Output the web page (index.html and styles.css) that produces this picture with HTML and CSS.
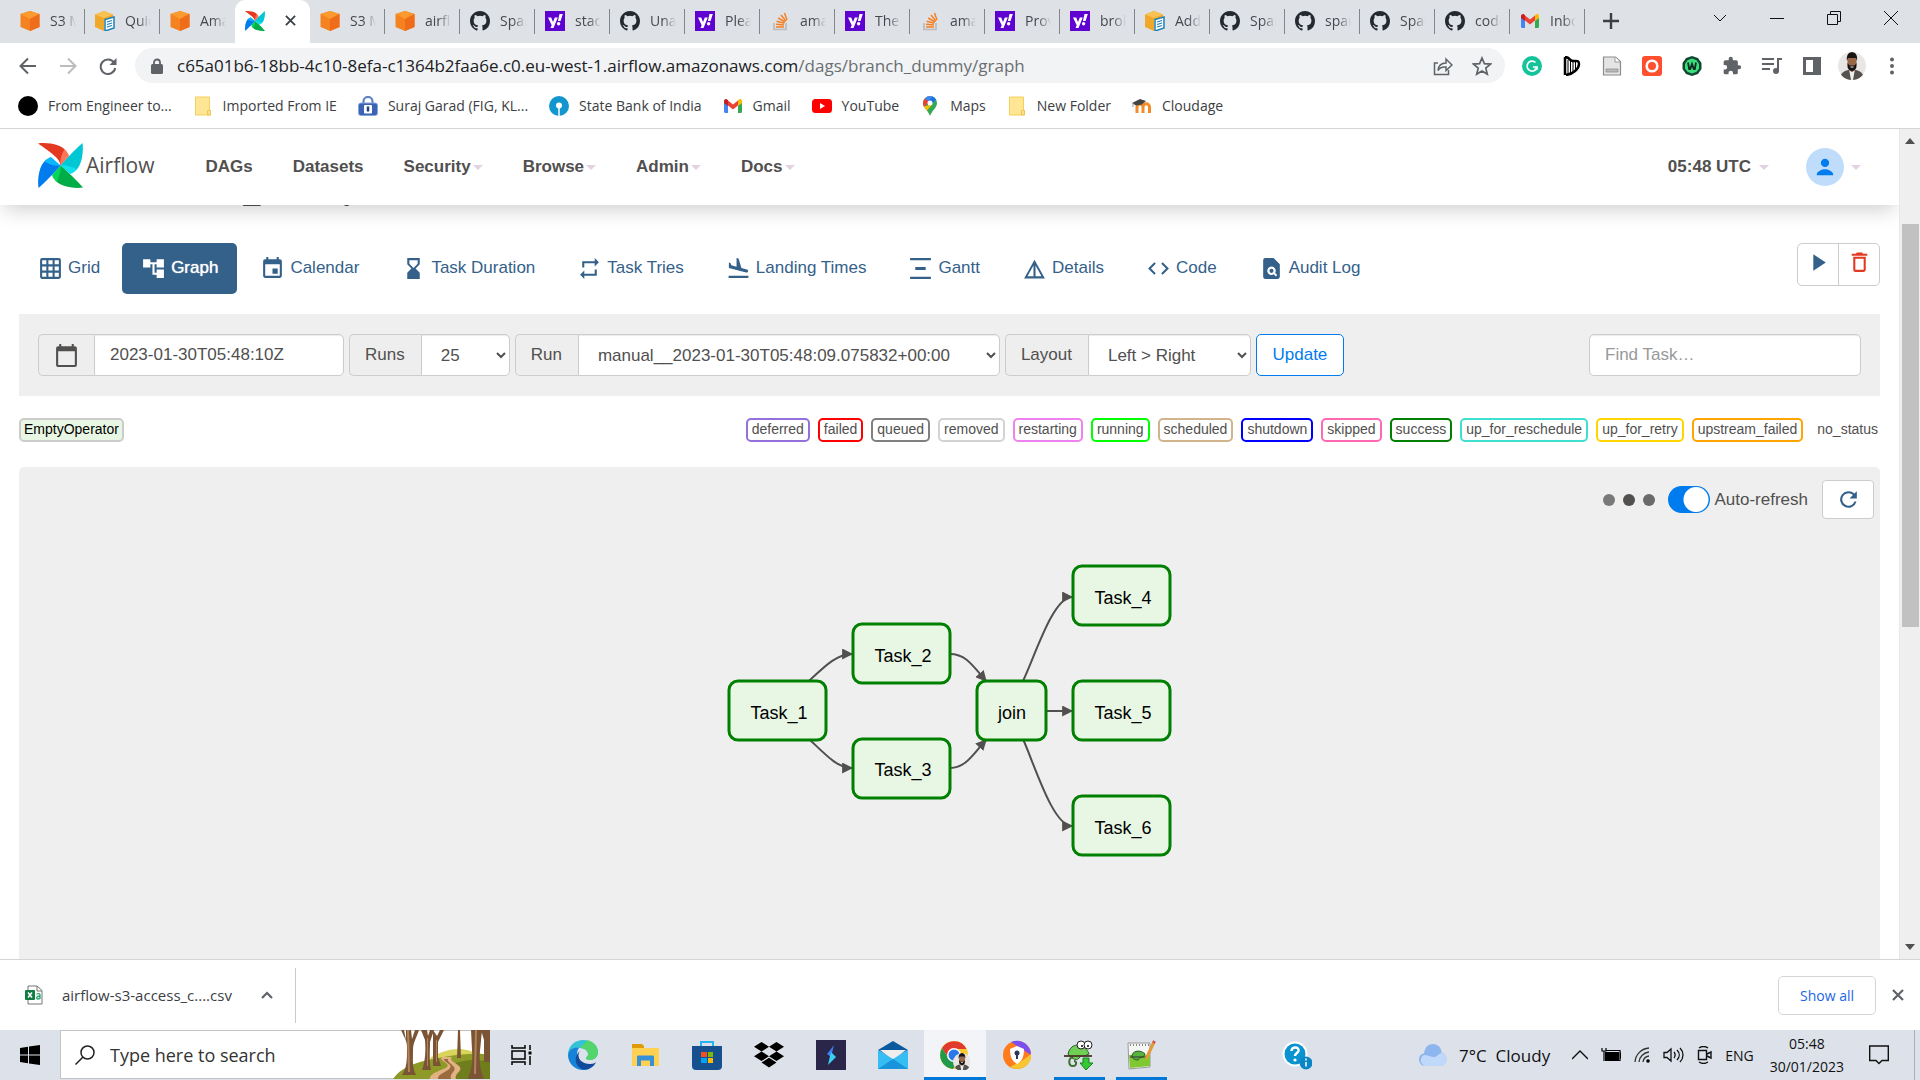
FILE: index.html
```html
<!DOCTYPE html>
<html lang="en">
<head>
<meta charset="utf-8">
<title>branch_dummy - Graph - Airflow</title>
<link rel="stylesheet" href="styles.css">
</head>
<body>
<svg class="defs" width="0" height="0" aria-hidden="true">
  <symbol id="cube" viewBox="0 0 20 20"><path d="M10 0l9.500 3v13L10 20 .5 16V3z" fill="#f58220"/><path d="M10 0l9.500 3L10 8 .5 3z" fill="#fb9a2e"/><path d="M10 8l9.500-5v13L10 20z" fill="#ef6c1a"/></symbol>
  <symbol id="docs" viewBox="0 0 20 20"><path d="M9 0l9 3.500v5L9 9v11L0 16V3.500z" fill="#f0a82a"/><path d="M9 0l9 3.500-9 3.500-9-3.500z" fill="#f8c153"/><path d="M10 8.500l9-2.500v11l-9 3z" fill="#fff" stroke="#1f82b8" stroke-width="1.500"/><path d="M12 11l5-1.500M12 13.500l5-1.500M12 16l5-1.500" stroke="#1f82b8" stroke-width="1.200"/></symbol>
  <symbol id="github" viewBox="0 0 16 16"><path fill="#24292f" d="M8 0C3.580 0 0 3.580 0 8c0 3.540 2.290 6.530 5.470 7.590.4.070.55-.17.55-.38v-1.490c-2.010.37-2.530-.49-2.690-.94-.09-.23-.48-.94-.82-1.130-.28-.15-.68-.52-.01-.53.63-.01 1.080.58 1.230.82.72 1.210 1.870.87 2.330.66.070-.52.28-.87.51-1.070-1.780-.2-3.640-.89-3.640-3.950 0-.87.31-1.590.82-2.150-.08-.2-.36-1.020.08-2.120 0 0 .67-.21 2.200.82a7.600 7.600 0 014 0c1.530-1.040 2.200-.82 2.200-.82.44 1.100.16 1.920.08 2.120.51.56.82 1.270.82 2.150 0 3.070-1.870 3.750-3.650 3.950.29.25.54.73.54 1.480v2.200c0 .21.15.46.55.38A8 8 0 0016 8c0-4.420-3.580-8-8-8z"/></symbol>
  <symbol id="yahoo" viewBox="0 0 20 20"><path fill="#5f01d1" d="M0 0h20v20H0z"/><path fill="#fff" d="M3 6.500h3.200L8 11l1.800-4.500h3L8.500 17h-3l1.200-2.800zM14.500 3h3.300l-2.200 7h-2.700z"/><circle cx="13.600" cy="12.800" r="1.700" fill="#fff"/></symbol>
  <symbol id="stack" viewBox="0 0 20 20"><path d="M4 12v6.500h12V12" fill="none" stroke="#bcbbbb" stroke-width="1.700"/><path d="M6 16h8M6 13.300l8 .8M6.600 10.300l7.700 2M8.200 7l6.800 4M11 4l5 6.200M14.500 2l2.500 7" stroke="#f48024" stroke-width="1.500"/></symbol>
  <symbol id="gmail" viewBox="0 0 20 20"><path fill="#4285f4" d="M1 5v10.500c0 .8.600 1.500 1.500 1.500H5V8z"/><path fill="#34a853" d="M19 5v10.500c0 .8-.6 1.500-1.500 1.500H15V8z"/><path fill="#ea4335" d="M5 4.500l5 4 5-4v5l-5 4-5-4z"/><path fill="#c5221f" d="M1 5c0-2 2-2.500 3.200-1.600L5 4.200V10L1 7z"/><path fill="#fbbc04" d="M19 5c0-2-2-2.500-3.200-1.600l-.8.800V10l4-3z"/></symbol>
  <symbol id="pinwheel" viewBox="0 0 45 45">
    <g><path fill="#e43921" d="M0 .5C10-1 26 2 28 9c2 3 0 7-5.500 13.500C22 15 12 9 0 .5z"/><path fill="#ff7557" d="M26.500 6c3 3 4.500 6 4.500 7l-8.500 9.500c-.5-4 0-9 4-16.500z"/></g>
    <g transform="rotate(90 22.500 22.500)"><path fill="#00c7d4" d="M0 .5C10-1 26 2 28 9c2 3 0 7-5.500 13.500C20 20 12 14 0 .5z"/><path fill="#11e1ee" d="M26.500 6c3 3 4.500 6 4.500 7l-8.500 9.500c-.5-4 0-9 4-16.500z"/></g>
    <g transform="rotate(180 22.500 22.500)"><path fill="#00ad46" d="M0 .5C10-1 26 2 28 9c2 3 0 7-5.500 13.500C20 20 12 14 0 .5z"/><path fill="#04d659" d="M26.500 6c3 3 4.500 6 4.500 7l-8.500 9.500c-.5-4 0-9 4-16.500z"/></g>
    <g transform="rotate(270 22.500 22.500)"><path fill="#017cee" d="M0 .5C10-1 26 2 28 9c2 3 0 7-5.500 13.500C20 20 12 14 0 .5z"/><path fill="#0cb6ff" d="M26.500 6c3 3 4.500 6 4.500 7l-8.500 9.500c-.5-4 0-9 4-16.500z"/></g>
  </symbol>
  <symbol id="folder" viewBox="0 0 20 20"><path d="M2.500 1h14v13l1 .5V18a1 1 0 01-1 1h-14z" fill="#ffe694" stroke="#f3cf5b"/><path d="M14.500 14.500h3V19h-3z" fill="#fbe08a" stroke="#e9c04a" stroke-width=".8"/></symbol>
  <symbol id="face" viewBox="0 0 28 28"><clipPath id="face-clip"><circle cx="14" cy="14" r="14"/></clipPath><g clip-path="url(#face-clip)"><path fill="#e9e7e6" d="M0 0h28v28H0z"/><path fill="#56534f" d="M2 28c0-7 4-9 8-10h8c5 1 8 4 8 10z"/><path fill="#eee" d="M11 17h6l-2 11h-2z"/><path fill="#9a6748" d="M9.500 6h9v10l-4 4h-1l-4-4z"/><path fill="#171412" d="M9 9c-1-6 2-9 5-9s6 3 5 9l-1-3h-8zM9.500 11l2 2.500h5l2-2.500c0 5-1 8-4.500 8s-4.500-3-4.500-8z"/><path fill="#eee" d="M12.500 14.500h3v1h-3z"/></g></symbol>
</svg>

<header class="browser">
  <nav class="tabstrip" aria-label="Browser tabs">
    <a class="tab" href="#"><svg><use href="#cube"/></svg><span>S3 Ma</span></a>
    <a class="tab" href="#"><svg><use href="#docs"/></svg><span>Quick</span></a>
    <a class="tab before-active" href="#"><svg><use href="#cube"/></svg><span>Amaz</span></a>
    <a class="tab active" href="#" aria-label="Airflow"><svg><use href="#pinwheel"/></svg><svg class="tab-close" viewBox="0 0 12 12"><path d="M1 1l10 10M11 1L1 11" stroke="#3c4043" stroke-width="2"/></svg></a>
    <a class="tab" href="#"><svg><use href="#cube"/></svg><span>S3 Ma</span></a>
    <a class="tab" href="#"><svg><use href="#cube"/></svg><span>airflo</span></a>
    <a class="tab" href="#"><svg><use href="#github"/></svg><span>Spar</span></a>
    <a class="tab" href="#"><svg><use href="#yahoo"/></svg><span>stack</span></a>
    <a class="tab" href="#"><svg><use href="#github"/></svg><span>Unab</span></a>
    <a class="tab" href="#"><svg><use href="#yahoo"/></svg><span>Pleas</span></a>
    <a class="tab" href="#"><svg><use href="#stack"/></svg><span>amaz</span></a>
    <a class="tab" href="#"><svg><use href="#yahoo"/></svg><span>The a</span></a>
    <a class="tab" href="#"><svg><use href="#stack"/></svg><span>amaz</span></a>
    <a class="tab" href="#"><svg><use href="#yahoo"/></svg><span>Prove</span></a>
    <a class="tab" href="#"><svg><use href="#yahoo"/></svg><span>broke</span></a>
    <a class="tab" href="#"><svg><use href="#docs"/></svg><span>Addi</span></a>
    <a class="tab" href="#"><svg><use href="#github"/></svg><span>Spar</span></a>
    <a class="tab" href="#"><svg><use href="#github"/></svg><span>spark</span></a>
    <a class="tab" href="#"><svg><use href="#github"/></svg><span>Spar</span></a>
    <a class="tab" href="#"><svg><use href="#github"/></svg><span>code</span></a>
    <a class="tab" href="#"><svg><use href="#gmail"/></svg><span>Inbox</span></a>
    <button class="new-tab" aria-label="New tab"><svg width="16" height="16" viewBox="0 0 16 16"><path d="M8 0v16M0 8h16" stroke="#3c4043" stroke-width="2.400"/></svg></button>
    <div class="window-controls">
      <button aria-label="Search tabs"><svg viewBox="0 0 14 14"><path d="M1 4l6 6 6-6"/></svg></button>
      <button aria-label="Minimize"><svg viewBox="0 0 14 14"><path d="M0 7.500h14"/></svg></button>
      <button aria-label="Restore"><svg viewBox="0 0 14 14"><path d="M.5 3.500h10v10H.5zM3.500 3V.5h10v10H11"/></svg></button>
      <button aria-label="Close"><svg viewBox="0 0 14 14"><path d="M0 0l14 14M14 0L0 14"/></svg></button>
    </div>
  </nav>

  <div class="toolbar">
    <button aria-label="Back"><svg viewBox="0 0 18 18"><path d="M17 9H2M9 1.500L1.500 9 9 16.500" fill="none" stroke="#5f6368" stroke-width="2"/></svg></button>
    <button aria-label="Forward"><svg viewBox="0 0 18 18"><path d="M1 9h15M9 1.500L16.500 9 9 16.500" fill="none" stroke="#babcbe" stroke-width="2"/></svg></button>
    <button aria-label="Reload"><svg viewBox="0 0 18 18"><path d="M15 5.500A7.300 7.300 0 1016.200 11" fill="none" stroke="#5f6368" stroke-width="2"/><path d="M17.500 1v7h-7z" fill="#5f6368"/></svg></button>
    <div class="omnibox">
      <svg width="12" height="16" viewBox="0 0 12 16"><path d="M3 7V4.500a3 3 0 016 0V7" fill="none" stroke="#5f6368" stroke-width="1.800"/><rect y="6" width="12" height="10" rx="1.500" fill="#5f6368"/></svg>
      <span class="url">c65a01b6-18bb-4c10-8efa-c1364b2faa6e.c0.eu-west-1.airflow.amazonaws.com<span>/dags/branch_dummy/graph</span></span>
      <button aria-label="Share"><svg viewBox="0 0 20 20"><path d="M5 7H1.500v11.500h14V14M5 14.500c.5-5 3.500-7.500 8-7.500V3l6 6-6 5.500V11c-4-.5-6.500 1-8 3.500z" fill="none" stroke="#5f6368" stroke-width="1.500"/></svg></button>
      <button aria-label="Bookmark"><svg viewBox="0 0 20 20"><path d="M10 2l2.400 5.600 6.100.5-4.700 4 1.500 6L10 14.900l-5.300 3.200 1.500-6-4.700-4 6.100-.5z" fill="none" stroke="#5f6368" stroke-width="1.700"/></svg></button>
    </div>
    <div class="extensions">
      <button aria-label="Grammarly"><svg viewBox="0 0 20 20"><circle cx="10" cy="10" r="10" fill="#15c39a"/><path d="M13.500 6.500A5 5 0 1015 11h-4M12.500 13H15v-2.500" fill="none" stroke="#fff" stroke-width="1.700"/></svg></button>
      <button aria-label="Harp"><svg viewBox="0 0 20 20"><path d="M3 1v18M3 1c5 0 4 4 8 4 3 0 6-1 6 3 0 5-6 10-13 11" fill="none" stroke="#000" stroke-width="2.500"/><path d="M6 4v14M8.500 5v12M11 6v9M13.500 6v7" stroke="#000"/></svg></button>
      <button aria-label="Page"><svg viewBox="0 0 20 20"><path d="M1.500 1h12l5 4.500V19h-17z" fill="#e4e4e4" stroke="#8b8b8b" stroke-width="1.200"/><path d="M13 1v5h5" fill="#fff" stroke="#999"/><path d="M4 13h12v3H4z" fill="#bbb" stroke="#888" stroke-width=".7"/></svg></button>
      <button aria-label="Office"><svg viewBox="0 0 20 20"><rect width="20" height="20" rx="3" fill="#ff4f2e"/><circle cx="10" cy="10" r="5.300" fill="none" stroke="#fff" stroke-width="2.600"/></svg></button>
      <button aria-label="Wappalyzer"><svg viewBox="0 0 20 20"><path d="M10 0l6 2 3.500 5v6L16 18l-6 2-6-2-3.500-5V7L4 2z" fill="#154734"/><path d="M10 2.500l4.500 1.700L17 8v4.500l-2.500 3.300L10 17.500l-4.500-1.700L3 12.500V8l2.500-3.800z" fill="#38e07b"/><path d="M6 6.500l1.200 6.500h1L10 8l1.800 5h1L14 6.500" fill="none" stroke="#102a20" stroke-width="1.800"/></svg></button>
      <button aria-label="Extensions"><svg viewBox="0 0 24 24"><path fill="#5f6368" d="M20.500 11H19V7a2 2 0 00-2-2h-4V3.500a2.500 2.500 0 00-5 0V5H4a2 2 0 00-2 2v3.800h1.500a2.700 2.700 0 010 5.400H2V20a2 2 0 002 2h3.800v-1.500a2.700 2.700 0 015.400 0V22H17a2 2 0 002-2v-4h1.500a2.500 2.500 0 000-5z"/></svg></button>
      <button aria-label="Media"><svg viewBox="0 0 20 20"><path d="M0 3h12M0 8h12M0 13h8M16 15V3h4" fill="none" stroke="#5f6368" stroke-width="2"/><circle cx="14" cy="15" r="3" fill="#5f6368"/></svg></button>
      <button aria-label="Side panel"><svg viewBox="0 0 20 20"><path fill="#5f6368" fill-rule="evenodd" d="M1 1h18v18H1zM4 4v12h7V4z"/></svg></button>
      <button aria-label="Profile"><svg class="avatar"><use href="#face"/></svg></button>
      <button aria-label="Menu"><svg viewBox="0 0 20 20" fill="#5f6368"><circle cx="10" cy="3.500" r="2"/><circle cx="10" cy="10" r="2"/><circle cx="10" cy="16.500" r="2"/></svg></button>
    </div>
  </div>

  <nav class="bookmarks" aria-label="Bookmarks">
    <a href="#"><svg viewBox="0 0 20 20"><circle cx="10" cy="10" r="10"/></svg>From Engineer to...</a>
    <a href="#"><svg><use href="#folder"/></svg>Imported From IE</a>
    <a href="#"><svg viewBox="0 0 20 20"><path d="M5.500 9V5.500a4.500 4.500 0 019 0V9" fill="none" stroke="#5d7fc4" stroke-width="2.200"/><rect x=".5" y="7" width="19" height="12.500" rx="2.500" fill="#3c62b4" stroke="#88a4dc"/><rect x="6" y="9" width="8" height="8.500" rx="1" fill="#fff"/><path d="M10 10.500v5" stroke="#223f86" stroke-width="2.500"/></svg>Suraj Garad (FIG, KL...</a>
    <a href="#"><svg viewBox="0 0 20 20"><circle cx="10" cy="10" r="10" fill="#1296cf"/><circle cx="10" cy="9.500" r="3" fill="#fff"/><path d="M10 9v11" stroke="#fff" stroke-width="1.500"/></svg>State Bank of India</a>
    <a href="#"><svg><use href="#gmail"/></svg>Gmail</a>
    <a href="#"><svg viewBox="0 0 20 20"><rect y="3" width="20" height="14" rx="3.500" fill="#f00"/><path d="M8 7l5 3-5 3z" fill="#fff"/></svg>YouTube</a>
    <a href="#"><svg viewBox="0 0 20 20"><path fill="#34a853" d="M3 7a7 7 0 0114 0c0 5-5 7-7 13C8 14 3 12 3 7z"/><path fill="#4285f4" d="M5 2.500A7 7 0 0112.500.5L6 9z"/><path fill="#1a73e8" d="M12.500.5A7 7 0 0116 3.500L12 8 8 6z"/><path fill="#ea4335" d="M5 2.500L9 6 4 11C2.500 8 2.500 5 5 2.500z"/><path fill="#fbbc04" d="M4 10.500L12.500 8 7 14.500C5.500 13 4.500 12 4 10.500z"/><circle cx="10" cy="7" r="2.500" fill="#fff"/></svg>Maps</a>
    <a href="#"><svg><use href="#folder"/></svg>New Folder</a>
    <a href="#"><svg viewBox="0 0 20 20"><path d="M5 17v-6a3 3 0 016 0v6m0-6a3 3 0 016.500 0v6" fill="none" stroke="#f28c28" stroke-width="3"/><path d="M0 7l8-4 6 2-4 3.500-6 1z" fill="#444"/><path d="M1 7v4" stroke="#999"/></svg>Cloudage</a>
  </nav>
</header>

<div class="viewport">
<div class="page">
  <nav class="navbar" aria-label="Airflow">
    <a class="brand" href="#"><svg><use href="#pinwheel"/></svg>Airflow</a>
    <a class="nav-item" href="#">DAGs</a>
    <a class="nav-item" href="#">Datasets</a>
    <a class="nav-item" href="#">Security<i class="caret"></i></a>
    <a class="nav-item" href="#">Browse<i class="caret"></i></a>
    <a class="nav-item" href="#">Admin<i class="caret"></i></a>
    <a class="nav-item" href="#">Docs<i class="caret"></i></a>
    <a class="nav-item clock" href="#">05:48 UTC<i class="caret"></i></a>
    <a class="user" href="#" aria-label="User"><span><svg viewBox="0 0 24 24"><path fill="#017cee" d="M12 12a4.500 4.500 0 100-9 4.500 4.500 0 000 9zM3 20.500c0-4 6-6 9-6s9 2 9 6V21H3z"/></svg></span><i class="caret"></i></a>
  </nav>

  <main class="content">
    <h1>DAG: branch_dummy</h1>
    <div class="view-row">
      <nav class="views" aria-label="DAG views">
        <a href="#"><svg viewBox="0 0 24 24"><path d="M20 2H4a2 2 0 00-2 2v16c0 1.100.9 2 2 2h16a2 2 0 002-2V4a2 2 0 00-2-2zM8 20H4v-4h4v4zm0-6H4v-4h4v4zm0-6H4V4h4v4zm6 12h-4v-4h4v4zm0-6h-4v-4h4v4zm0-6h-4V4h4v4zm6 12h-4v-4h4v4zm0-6h-4v-4h4v4zm0-6h-4V4h4v4z"/></svg>Grid</a>
        <a href="#" class="current"><svg viewBox="0 0 24 24"><path d="M22 11V3h-7v3H9V3H2v8h7V8h2v10h4v3h7v-8h-7v3h-2V8h2v3z"/></svg>Graph</a>
        <a href="#"><svg viewBox="0 0 24 24"><path d="M17 12h-5v5h5v-5zM16 1v2H8V1H6v2H5a2 2 0 00-2 2v14c0 1.100.9 2 2 2h14a2 2 0 002-2V5a2 2 0 00-2-2h-1V1h-2zm3 18H5V8h14v11z"/></svg>Calendar</a>
        <a href="#"><svg viewBox="0 0 24 24"><path d="M6 2v6l4 4-4 4v6h12v-6l-4-4 4-4V2H6zm10 5.500l-4 4-4-4V4h8z"/></svg>Task Duration</a>
        <a href="#"><svg viewBox="0 0 24 24"><path d="M7 7h10v3l4-4-4-4v3H5v6h2V7zm10 10H7v-3l-4 4 4 4v-3h12v-6h-2v4z"/></svg>Task Tries</a>
        <a href="#"><svg viewBox="0 0 24 24"><path d="M2.500 19h19v2h-19zM19.340 15.850c.8.210 1.620-.26 1.840-1.060.21-.8-.26-1.620-1.060-1.840l-5.310-1.420-2.760-9.020L10.120 2v8.280L5.150 8.950l-.93-2.320-1.450-.39v5.170l16.570 4.440z"/></svg>Landing Times</a>
        <a href="#"><svg viewBox="0 0 24 24"><path d="M2 2h20v2H2zM7 10.500h10v3H7zM2 20h20v2H2z"/></svg>Gantt</a>
        <a href="#"><svg viewBox="0 0 24 24"><path fill-rule="evenodd" d="M12 3.500L2 21.500h20zM11 9v10.500H5.300zm2 0l5.700 10.500H13z"/></svg>Details</a>
        <a href="#"><svg viewBox="0 0 24 24"><path d="M9.400 16.600L4.800 12l4.600-4.600L8 6l-6 6 6 6 1.400-1.400zm5.200 0l4.600-4.600-4.600-4.600L16 6l6 6-6 6-1.400-1.400z"/></svg>Code</a>
        <a href="#"><svg viewBox="0 0 24 24"><path fill-rule="evenodd" d="M14 2H6a2 2 0 00-2 2v16c0 1.100.9 2 2 2h12a2 2 0 002-2V8zM12 10.200a4 4 0 013.500 6l2 2.100-1.300 1.300-2-2.100A4 4 0 1112 10.200zm0 2a2 2 0 100 4 2 2 0 000-4z"/></svg>Audit Log</a>
      </nav>
      <div class="dag-actions">
        <button aria-label="Trigger DAG"><svg viewBox="0 0 24 24"><path fill="#34618a" d="M7 4l12 8-12 8z"/></svg></button>
        <button aria-label="Delete DAG"><svg viewBox="0 0 24 24"><path fill="#e43921" d="M6 19c0 1.100.9 2 2 2h8a2 2 0 002-2V6.500H6V19zM8 8.500h8V19H8V8.500zM15.500 3.500l-1-1h-5l-1 1H4.500v2h15v-2z"/></svg></button>
      </div>
    </div>

    <form class="filters">
      <div class="group">
        <label class="addon date-addon" for="base-date" aria-label="Base date"><svg viewBox="0 0 24 24"><path fill="#51504f" d="M20 3h-1V1h-2v2H7V1H5v2H4a2 2 0 00-2 2v16c0 1.100.9 2 2 2h16a2 2 0 002-2V5a2 2 0 00-2-2zm0 18H4V8h16v13z"/></svg></label>
        <input id="base-date" class="date" type="text" value="2023-01-30T05:48:10Z">
      </div>
      <div class="group">
        <label class="addon" for="runs">Runs</label>
        <select id="runs" class="runs"><option>25</option></select>
      </div>
      <div class="group">
        <label class="addon" for="run">Run</label>
        <select id="run" class="run"><option>manual__2023-01-30T05:48:09.075832+00:00</option></select>
      </div>
      <div class="group">
        <label class="addon" for="layout">Layout</label>
        <select id="layout" class="layout"><option>Left &gt; Right</option></select>
      </div>
      <button class="update" type="button">Update</button>
      <input class="find" type="text" placeholder="Find Task…" aria-label="Find task">
    </form>

    <div class="legend">
      <span class="chip operator">EmptyOperator</span>
      <span class="chip deferred">deferred</span>
      <span class="chip failed">failed</span>
      <span class="chip queued">queued</span>
      <span class="chip removed">removed</span>
      <span class="chip restarting">restarting</span>
      <span class="chip running">running</span>
      <span class="chip scheduled">scheduled</span>
      <span class="chip shutdown">shutdown</span>
      <span class="chip skipped">skipped</span>
      <span class="chip success">success</span>
      <span class="chip reschedule">up_for_reschedule</span>
      <span class="chip retry">up_for_retry</span>
      <span class="chip upstream">upstream_failed</span>
      <span class="chip none">no_status</span>
    </div>

    <section class="graph-panel" aria-label="Graph">
      <div class="graph-tools">
        <svg class="dots" viewBox="0 0 52 12"><circle cx="6" cy="6" r="6" fill="#7a7979"/><circle cx="26" cy="6" r="6" fill="#51504f"/><circle cx="46" cy="6" r="6" fill="#6b6a6a"/></svg>
        <label class="refresh-toggle"><input type="checkbox" checked>Auto-refresh</label>
        <button aria-label="Refresh"><svg viewBox="0 0 24 24"><path fill="#34618a" d="M17.650 6.350A8 8 0 1019.730 14h-2.080A6 6 0 1112 6c1.660 0 3.140.69 4.220 1.780L13 11h7V4l-2.350 2.350z"/></svg></button>
      </div>
      <svg class="graph" viewBox="0 0 446 294" role="img" aria-label="Task graph">
        <defs><marker id="arrow" viewBox="0 0 10 10" refX="9" refY="5" markerUnits="userSpaceOnUse" markerWidth="11" markerHeight="11" orient="auto"><path d="M0 0l10 5-10 5z" fill="#51504f"/></marker></defs>
        <g class="edges">
          <path d="M82 117C98 102 110 90 125 90"/>
          <path d="M82 175C98 190 110 204 125 204"/>
          <path d="M223 90C239 90 246 102 259 117"/>
          <path d="M223 204C239 204 246 190 259 176"/>
          <path d="M296 117C308 92 326 33 345 33"/>
          <path d="M319 147H345"/>
          <path d="M296 175C308 202 326 262 345 262"/>
        </g>
        <g class="nodes">
          <rect x="2" y="117" width="97" height="59" rx="9"/>
          <rect x="126" y="60" width="97" height="59" rx="9"/>
          <rect x="126" y="175" width="97" height="59" rx="9"/>
          <rect x="250" y="117" width="69" height="59" rx="9"/>
          <rect x="346" y="2" width="97" height="59" rx="9"/>
          <rect x="346" y="117" width="97" height="59" rx="9"/>
          <rect x="346" y="232" width="97" height="59" rx="9"/>
        </g>
        <g class="names">
          <text x="52" y="155">Task_1</text>
          <text x="176" y="98">Task_2</text>
          <text x="176" y="212">Task_3</text>
          <text x="285" y="155">join</text>
          <text x="396" y="40">Task_4</text>
          <text x="396" y="155">Task_5</text>
          <text x="396" y="270">Task_6</text>
        </g>
      </svg>
    </section>
  </main>
</div>
<div class="scrollbar" aria-hidden="true">
  <svg viewBox="0 0 10 6"><path d="M0 6l5-6 5 6z"/></svg>
  <div class="track"><div class="thumb"></div></div>
  <svg viewBox="0 0 10 6"><path d="M0 0l5 6 5-6z"/></svg>
</div>
</div>

<footer class="downloads">
  <div class="file">
    <svg width="18" height="20" viewBox="0 0 18 20"><path d="M3 1h9l5 4.500V19H3z" fill="#fff" stroke="#777"/><path d="M12 1v5h5" fill="none" stroke="#777"/><rect y="5" width="10" height="10" rx="1" fill="#107c41"/><path d="M3 7.500l4 5M7 7.500l-4 5" stroke="#fff" stroke-width="1.500"/><path d="M11.500 9c3-1 3.500 0 3.500 1v4m0-3c-4 0-4 3-2 3 1 0 2-1 2-2" fill="none" stroke="#21a366" stroke-width="1.300"/></svg>
    <span>airflow-s3-access_c....csv</span>
    <button aria-label="File menu"><svg width="12" height="8" viewBox="0 0 12 8"><path d="M1 7l5-5 5 5" fill="none" stroke="#5f6368" stroke-width="2.200"/></svg></button>
  </div>
  <button class="show-all">Show all</button>
  <button class="close" aria-label="Close"><svg width="12" height="12" viewBox="0 0 12 12"><path d="M1 1l10 10M11 1L1 11" stroke="#5f6368" stroke-width="2.200"/></svg></button>
</footer>

<footer class="taskbar">
  <button class="start" aria-label="Start"><svg width="20" height="20" viewBox="0 0 20 20"><path d="M0 3l8-1.200v7.700H0zM9 1.600L20 0v9.500H9zM0 10.500h8v7.700L0 17zM9 10.500h11V20L9 18.400z"/></svg></button>
  <label class="search">
    <svg width="20" height="20" viewBox="0 0 20 20"><circle cx="12.500" cy="7.500" r="6.500" fill="none" stroke="#222" stroke-width="1.500"/><path d="M8 12l-7.500 7.500" stroke="#222" stroke-width="1.500"/></svg>
    <input type="text" placeholder="Type here to search" aria-label="Type here to search">
    <svg class="forest" width="97" height="49" viewBox="0 0 97 49">
      <path d="M38 27c10-5 18-8 28-8s12 4 31 6v24H30z" fill="#d9d55c"/>
      <path d="M0 49c6-10 22-17 40-20 20-4 40-7 57-4v24z" fill="#8d9a27"/>
      <path d="M60 34c12-5 26-5 37-2v17H50z" fill="#6f7d1c"/>
      <path d="M49 27c-4 4 9 6 5 10-4 3-18 6-17 12h26c-2-6 8-8 3-13-4-4-10-5-7-9z" fill="#e2b184"/>
      <path d="M51 29c-1 3 9 5 6 9-3 4-13 6-12 11h13c-2-6 6-8 3-12-3-4-7-5-6-8z" fill="#9a6b3e"/>
      <g fill="#7a5434"><path d="M8 0c4 9 6 11 6 18 0 12 0 20-5 27h14c-4-7-3-15-3-25 0-8 4-13 6-20h-4l-3 9-1-9h-5v10L11 0zM28 0l4 10c1 13 0 22-3 30h9c-2-8-1-20-1-28l4-12h-4l-2 6-1-6zM40 0v36h8l-3-9V12l6-12h-4l-3 6zM78 0l1 20c1 14-1 20-4 29h16c-4-9-5-18-4-28l2-21zM65 0h2l1 28h-4zM88 0l3 10v22h7V0z"/></g>
      <g fill="#b08358"><path d="M14 0h2l1 42h-2zM34 8h1v28h-1zM43 10h1v22h-1zM82 0h2l-1 44h-2z"/></g>
    </svg>
  </label>
  <button class="app" aria-label="Task view"><svg class="task-view" viewBox="0 0 24 24"><path d="M3 2v3h13V2M3 8h13v8H3zM3 22v-3h13v3M21 2v5M21 13v9" fill="none" stroke="#000" stroke-width="1.500"/><path d="M19.500 8.500h3v3h-3z"/></svg></button>
  <button class="app" aria-label="Edge"><svg viewBox="0 0 30 30"><path d="M0 15C0 5 8 0 15 0c9 0 15 6 15 12 0 5-4 8-8 8-3 0-4-1-4-2 0-1 2-1 2-4 0-4-5-6-9-6C5 8 1 12 0 15z" fill="#35c1d8"/><path d="M18 0c8 1 12 7 12 12 0 5-4 8-8 8-3 0-4-1-4-2 0-1 2-1 2-4 0-4-4-6-8-6C16 2 20 3 18 0z" fill="#54d56b"/><path d="M0 15C1 9 6 7 11 8c-4 4-3 22 10 21C10 33 0 25 0 15z" fill="#1683d8"/><path d="M12 11c-4 5 0 13 10 13 3 0 5-1 6-2-2 5-8 9-14 7C6 26 6 15 12 11z" fill="#114a9b"/></svg></button>
  <button class="app" aria-label="File Explorer"><svg viewBox="0 0 30 30"><path d="M2 4h10l2 2v4H2z" fill="#e09b0b"/><path d="M2 8h27v18H2z" fill="#ffd152"/><path d="M7 26V17c0-1 .5-1.500 1.500-1.500h14c1 0 1.500.5 1.500 1.500v9h-4v-5.500h-9V26z" fill="#3590d8"/></svg></button>
  <button class="app" aria-label="Store"><svg viewBox="0 0 30 30"><path d="M9 6V2h12v4" fill="none" stroke="#25b4f0" stroke-width="2"/><path d="M0 6h30v20a4 4 0 01-4 4H4a4 4 0 01-4-4z" fill="#17508f"/><path d="M9 12h6v5H9z" fill="#f25022"/><path d="M16 12h5v5h-5z" fill="#7fba00"/><path d="M9 18h6v5H9z" fill="#00a4ef"/><path d="M16 18h5v5h-5z" fill="#ffb900"/></svg></button>
  <button class="app" aria-label="Dropbox"><svg viewBox="0 0 30 30"><path d="M7.500 2l7.500 4.800-7.500 4.700L0 6.800zM22.500 2L30 6.800l-7.500 4.700L15 6.800zM7.500 11.500l7.500 4.800L7.500 21 0 16.300zM22.500 11.500l7.500 4.800-7.500 4.700-7.500-4.700zM7.500 22.500l7.500-4.700 7.500 4.700L15 27.500z"/></svg></button>
  <button class="app" aria-label="Sublime"><svg viewBox="0 0 30 30"><path d="M0 0h30v30H0z" fill="#29264a"/><path d="M18 5l-7 9 4 3z" fill="#3f7df0"/><path d="M12 25l8-8-5-5-1 4z" fill="#3ad0f5"/></svg></button>
  <button class="app" aria-label="Mail"><svg viewBox="0 0 30 30"><path d="M0 10L15 1l15 9-15 9z" fill="#0b5a9e"/><path d="M2 10h26L15 20z" fill="#eee"/><path d="M0 10l15 9 15-9v19H0z" fill="#36bdf4"/><path d="M15 19l15 10H0z" fill="#1a93dd"/></svg></button>
  <button class="app focused" aria-label="Chrome"><svg viewBox="0 0 30 30"><circle cx="14" cy="15" r="14" fill="#fbc72e"/><path d="M2 8a14 14 0 0124.500 1H14L9 19z" fill="#e03a2f"/><path d="M2 8a14 14 0 0011 21l6-11-10 1z" fill="#219a4c"/><circle cx="14" cy="15" r="7" fill="#fff"/><circle cx="14" cy="15" r="5.500" fill="#2b79e8"/><use href="#face" x="13" y="13" width="18" height="18"/></svg></button>
  <button class="app" aria-label="Avast Secure Browser"><svg viewBox="0 0 30 30"><circle cx="15" cy="15" r="14" fill="#ff7b1c"/><path d="M9 2a14 14 0 0120 13l-9-6z" fill="#7c4ef0"/><path d="M29 14A14 14 0 018 27l13-7z" fill="#f8c630"/><path d="M15 6l7 3c0 8-2 12-7 15-5-3-7-7-7-15z" fill="#fff"/><circle cx="15" cy="13" r="2.500" fill="#2e3656"/><path d="M14 13h2v6h-2z" fill="#2e3656"/></svg></button>
  <button class="app open" aria-label="Notepad++ updater"><svg viewBox="0 0 30 30"><path d="M4 14c2-9 9-10 13-8 5 2 7 5 8 8-5 3-8 1-10 4-3 4-9-1-11-4z" fill="#6fce54" stroke="#2e5c23"/><path d="M9 17c-5 1-5 9 0 9 4 0 4-5 1-5" fill="none" stroke="#3b6f30" stroke-width="2"/><circle cx="17" cy="5" r="4" fill="#fff" stroke="#222"/><circle cx="24" cy="5" r="4" fill="#fff" stroke="#222"/><circle cx="18" cy="6" r="1"/><circle cx="24" cy="6" r="1"/><path d="M0 16h28" stroke="#4a3326" stroke-width="1.800"/><path d="M19 18h6v5h4l-7 7-6-7h3z" fill="#34c934" stroke="#168016"/></svg></button>
  <button class="app open" aria-label="Notepad++"><svg viewBox="0 0 30 30"><path d="M2 3h22v24l-21 2z" fill="#f4f6f4" stroke="#999"/><path d="M3 15h21v11L4 28z" fill="#7fc832"/><path d="M6 15c2-5 9-5 13-1-2 5-5 2-7 6-4 0-6-2-6-5z" fill="#58b440" stroke="#2a5522"/><path d="M4 17h16" stroke="#333"/><path d="M4 5h19" stroke="#888" stroke-dasharray="1 2" stroke-width="2"/><path d="M28 2l-8 17" stroke="#e39a36" stroke-width="3"/><path d="M28.500 1l-1 2" stroke="#d15050" stroke-width="3"/></svg></button>
  <button class="app help" aria-label="Help"><svg viewBox="0 0 30 30"><circle cx="13" cy="14" r="12.500" fill="#fff"/><circle cx="13" cy="14" r="10.500" fill="#0a93cf"/><path d="M9.500 11c0-5 8-4.500 7 0-.5 2-3.500 2.500-3.500 5" fill="none" stroke="#fff" stroke-width="2.500"/><circle cx="13" cy="20" r="1.600" fill="#fff"/><circle cx="24" cy="23" r="6.500" fill="#0a86c6"/><path d="M24 22v4.500M24 18.500v2" stroke="#fff" stroke-width="1.500"/></svg></button>
  <div class="tray">
    <svg class="cloud" width="30" height="24" viewBox="0 0 30 24"><path d="M7 23a6.500 6.500 0 01-1-12.800C7 4 10.500 1 15 1c5 0 8.500 4 8.500 8.500A7 7 0 0123 23z" fill="#8db5ee"/><path d="M7 23a6 6 0 01-1-11c4 0 7 2 10 2s5-4 8-4a6.700 6.700 0 01-1 13z" fill="#c0d8fa"/></svg>
    <span class="weather">7°C &nbsp;Cloudy</span>
    <svg width="16" height="16" viewBox="0 0 16 16"><path d="M0 12l8-8 8 8" fill="none" stroke="#111" stroke-width="1.400"/></svg>
    <svg width="20" height="16" viewBox="0 0 20 16"><path d="M4 5h14v9H4z"/><path d="M5 3.500h14v10h-1M18.500 6H20v5h-1.500M3 7v7M1 1v3h4V1M3 4v3" fill="none" stroke="#000" stroke-width="1.200"/></svg>
    <svg width="16" height="16" viewBox="0 0 16 16"><path d="M1 15A15 15 0 0115 1M5 15A11 11 0 0115 5M9 15a7 7 0 016-6" fill="none" stroke="#333" stroke-width="1.300"/><circle cx="14" cy="14" r="1.800"/></svg>
    <svg width="21" height="16" viewBox="0 0 21 16"><path d="M1 5.500h3L8 2v12l-4-3.500H1zM11 5c1.500 2 1.500 4 0 6M14 3c3 3 3 7 0 10M17 1c4 4 4 10 0 14" fill="none" stroke="#111" stroke-width="1.300"/></svg>
    <svg width="15" height="18" viewBox="0 0 15 18"><path d="M1.500 4.500h8v9h-8zM10 8l4-2v6l-4-2M2 2c3-2 6-2 9 0M2 16c3 2 6 2 9 0" fill="none" stroke="#111" stroke-width="1.400"/></svg>
    <span class="lang">ENG</span>
    <div class="clock-date"><span>05:48</span><span>30/01/2023</span></div>
    <button class="notify" aria-label="Notifications"><svg width="20" height="20" viewBox="0 0 20 20"><path d="M.7 1h18.600v14.500H13L10 18.500l-3-3H.7z" fill="none" stroke="#111" stroke-width="1.400"/></svg></button>
  </div>
</footer>
</body>
</html>
```
FILE: styles.css
```css
* { box-sizing: border-box; }

body {
  margin: 0;
  height: 100vh;
  display: flex;
  flex-direction: column;
  overflow: hidden;
  background: #fff;
  color: #51504f;
  font-family: "Liberation Sans", Arial, sans-serif;
  font-size: 17px;
}

a { color: inherit; text-decoration: none; }
button { padding: 0; border: 0; background: none; font: inherit; color: inherit; display: flex; align-items: center; justify-content: center; }
svg { display: block; flex: none; }
.defs { position: absolute; }

/* Browser chrome */
.browser, .downloads, .taskbar { flex: none; font-family: "Open Sans", sans-serif; }
.browser { border-bottom: 1px solid #d3d5d8; }

.tabstrip { display: flex; height: 43px; padding-left: 10px; background: #dee1e6; }
.tab {
  display: flex;
  flex: none;
  align-items: center;
  gap: 10px;
  width: 75px;
  height: 43px;
  padding: 0 9px 2px 10px;
  background: linear-gradient(#80868b, #80868b) right center / 1px 25px no-repeat;
  color: #45494d;
  font-size: 14px;
}
.tab svg { width: 20px; height: 20px; }
.tab span { flex: 1; overflow: hidden; white-space: nowrap; mask-image: linear-gradient(to right, #000 50%, transparent); }
.tab.before-active { background: none; }
.tab.active { justify-content: space-between; border-radius: 10px 10px 0 0; background: #fff; padding-right: 14px; }
.tab .tab-close { width: 11px; height: 11px; }
.new-tab { width: 52px; padding-bottom: 1px; }
.window-controls { display: flex; margin-left: auto; height: 36px; padding-right: 1px; }
.window-controls button { width: 57px; }
.window-controls svg { width: 14px; height: 14px; fill: none; stroke: #111; stroke-width: 1; }

.toolbar { display: flex; align-items: center; height: 45px; padding: 0 8px; }
.toolbar > button, .extensions button { width: 40px; height: 36px; }
.toolbar > button svg { width: 18px; height: 18px; }
.omnibox {
  display: flex;
  flex: 1;
  align-items: center;
  height: 35px;
  margin: 0 7px;
  padding: 0 13px 0 16px;
  border-radius: 18px;
  background: #f1f3f4;
}
.omnibox svg { width: 20px; height: 20px; }
.omnibox > svg { width: 12px; height: 16px; }
.omnibox button { width: 20px; margin-left: 19px; }
.url { flex: 1; margin-left: 14px; color: #202124; font-size: 17px; white-space: nowrap; }
.url span { color: #6a6e73; }
.extensions { display: flex; }
.extensions svg { width: 20px; height: 20px; }
.extensions .avatar { width: 28px; height: 28px; }

.bookmarks { display: flex; align-items: center; gap: 21px; height: 40px; padding: 0 18px 5px; color: #3c4043; font-size: 14px; }
.bookmarks a { display: flex; align-items: center; gap: 10px; white-space: nowrap; }
.bookmarks svg { width: 20px; height: 20px; }

/* Page viewport */
.viewport { display: flex; flex: 1; min-height: 0; }
.page { display: flex; flex: 1; flex-direction: column; min-width: 0; overflow: hidden; }
.scrollbar { display: flex; flex-direction: column; align-items: center; width: 21px; padding: 9px 0; background: #efefef; border-left: 1px solid #e8e8e8; }
.scrollbar svg { width: 10px; height: 6px; fill: #505050; }
.track { flex: 1; padding-top: 80px; }
.thumb { width: 17px; height: 56%; background: #c1c1c1; }

.navbar {
  display: flex;
  flex: none;
  align-items: center;
  height: 76px;
  padding: 0 38px;
  background: #fff;
  box-shadow: 0 8px 20px -4px rgba(0, 0, 0, .2);
  z-index: 1;
}
.brand { display: flex; align-items: center; gap: 3px; margin: 0 31px 4px 0; font-family: "Open Sans", sans-serif; font-size: 21px; }
.brand svg { width: 45px; height: 45px; }
.nav-item { display: flex; align-items: center; gap: 2px; padding: 0 20px; font-weight: bold; }
.caret { border: 5px solid transparent; border-top-color: #e2d2e2; border-bottom: 0; }
.clock { gap: 8px; margin-left: auto; padding-right: 37px; }
.user { display: flex; align-items: center; gap: 7px; }
.user span { display: flex; align-items: center; justify-content: center; width: 38px; height: 38px; border-radius: 50%; background: #bfddfb; }
.user svg { width: 22px; height: 22px; }

/* DAG content */
.content { display: flex; flex: 1; flex-direction: column; min-height: 0; padding: 0 19px; }
h1 { margin: -30px 0 38px; padding-left: 51px; font-size: 30px; line-height: 30px; font-weight: normal; }
.view-row { display: flex; justify-content: space-between; align-items: flex-start; }
.views { display: flex; gap: 4px; color: #34618a; }
.views a { display: flex; align-items: center; gap: 5px; height: 51px; padding: 0 19px 1px; border-radius: 5px; white-space: nowrap; }
.views a:first-child { padding-right: 18px; }
.views svg { width: 25px; height: 25px; fill: currentColor; }
.views .current { background: #34618a; color: #fff; text-shadow: 0 0 1px #fff; }
.dag-actions { display: flex; border: 1px solid #ccc; border-radius: 5px; }
.dag-actions button { width: 40px; height: 41px; padding-bottom: 4px; }
.dag-actions button + button { width: 41px; border-left: 1px solid #ccc; }
.dag-actions svg { width: 25px; height: 25px; }

.filters { display: flex; gap: 5px; margin-top: 20px; padding: 20px 19px; background: #efefef; }
.group { display: flex; height: 42px; }
.addon { display: flex; align-items: center; padding: 0 16px 0 15px; border: 1px solid #ccc; border-right: 0; border-radius: 5px 0 0 5px; background: #eee; }
.date-addon { width: 56px; padding: 0 15px; }
.date-addon svg { width: 25px; height: 25px; }
.filters input, .filters select, .update {
  height: 42px;
  border: 1px solid #ccc;
  border-radius: 5px;
  background: #fff;
  color: #51504f;
  font-family: inherit;
  font-size: 17px;
}
.filters input, .filters select { padding: 0 15px; box-shadow: inset 0 1px 1px rgba(0, 0, 0, .08); }
.filters .group input, .filters .group select { border-radius: 0 5px 5px 0; }
.filters .date { width: 250px; }
.filters .runs { width: 89px; }
.filters .run { width: 422px; }
.filters .layout { width: 163px; }
.filters .update { width: 88px; border-color: #017cee; color: #017cee; }
.filters .find { width: 272px; margin-left: auto; }
.filters .find::placeholder { color: #999; }

.legend { display: flex; gap: 8px; padding: 22px 0 25px; font-size: 14px; }
.chip { height: 24px; padding: 0 4px; border: 2px solid #ccc; border-radius: 5px; line-height: 18px; white-space: nowrap; }
.operator { margin-right: auto; padding: 0 3px; background: #e8f7e4; color: #000; }
.deferred { border-color: mediumpurple; }
.failed { border-color: red; }
.queued { border-color: gray; }
.removed { border-color: lightgrey; }
.restarting { border-color: violet; }
.running { border-color: lime; }
.scheduled { border-color: tan; }
.shutdown { border-color: blue; }
.skipped { border-color: hotpink; }
.success { border-color: green; }
.reschedule { border-color: turquoise; }
.retry { border-color: gold; }
.upstream { border-color: orange; }
.none { border-color: transparent; padding-right: 0; }

.graph-panel { flex: 1; min-height: 0; overflow: hidden; border-radius: 5px 5px 0 0; background: #efefef; }
.graph-tools { display: flex; align-items: center; justify-content: flex-end; padding: 13px 6px 0 0; }
.dots { width: 52px; height: 12px; }
.refresh-toggle { display: flex; align-items: center; gap: 4px; margin: 0 13px; padding-right: 1px; }
.refresh-toggle input {
  appearance: none;
  width: 42px;
  height: 27px;
  margin: 0;
  border-radius: 14px;
  background: radial-gradient(circle at 28px 50%, #fff 12px, #017cee 13px);
}
.graph-tools button { width: 52px; height: 39px; border: 1px solid #ccc; border-radius: 4px; background: #fff; }
.graph-tools button svg { width: 25px; height: 25px; }
.graph { width: 446px; height: 294px; margin: 45px auto 0; }
.edges { fill: none; stroke: #51504f; stroke-width: 2; }
.edges path { marker-end: url(#arrow); }
.nodes { fill: #e8f7e4; stroke: green; stroke-width: 3; }
.names { fill: #000; font-size: 18px; text-anchor: middle; }

/* Download shelf */
.downloads { display: flex; align-items: center; height: 71px; padding: 0 16px 0 25px; border-top: 1px solid #d3d5d8; color: #3c4043; font-size: 15px; }
.file { display: flex; align-items: center; height: 55px; margin-right: auto; padding-right: 22px; border-right: 1px solid #c8cacd; }
.file span { margin: 0 29px 0 19px; }
.show-all { width: 98px; height: 39px; border: 1px solid #d3d5d8; border-radius: 5px; color: #1a66e8; font-size: 14px; }
.close { margin-left: 16px; }

/* Windows taskbar */
.taskbar { display: flex; height: 50px; background: #dde2ea; color: #111; }
.start { width: 60px; }
.search { display: flex; align-items: center; width: 430px; height: 49px; padding-left: 14px; border: 1px solid #c4c4c4; border-width: 1px 0 1px 1px; background: #fff; }
.search input { flex: 1; min-width: 0; margin-left: 15px; padding: 0; border: 0; font-family: inherit; font-size: 18px; }
.search input::placeholder { color: #333; }
.app { width: 62px; }
.app svg { width: 30px; height: 30px; }
.app .task-view { width: 24px; height: 24px; }
.app.focused { background: linear-gradient(#0078d7, #0078d7) bottom / 100% 3px no-repeat #f3f4f7; }
.app.open { background: linear-gradient(#0078d7, #0078d7) bottom / 51px 3px no-repeat; }
.app.help { margin-left: 94px; }
.tray { display: flex; align-items: center; gap: 13px; margin-left: auto; padding-right: 5px; font-size: 14px; }
.cloud { margin-right: -2px; }
.weather { margin-right: 9px; font-size: 17px; }
.clock-date { display: flex; flex-direction: column; align-items: center; margin: 0 12px 0 3px; line-height: 23px; }
.notify { height: 50px; padding-right: 25px; border-right: 1px solid #aab0b8; }
```
